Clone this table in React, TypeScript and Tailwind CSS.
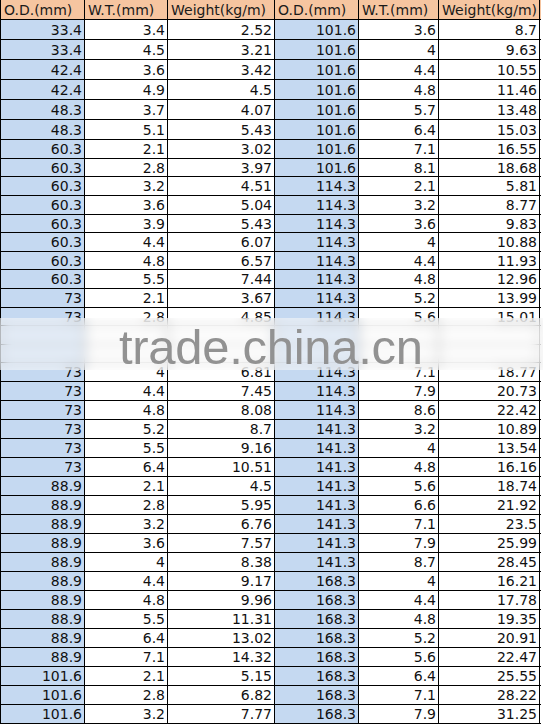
import React from "react";

const left: [string, string, string][] = [
  ["33.4", "3.4", "2.52"],
  ["33.4", "4.5", "3.21"],
  ["42.4", "3.6", "3.42"],
  ["42.4", "4.9", "4.5"],
  ["48.3", "3.7", "4.07"],
  ["48.3", "5.1", "5.43"],
  ["60.3", "2.1", "3.02"],
  ["60.3", "2.8", "3.97"],
  ["60.3", "3.2", "4.51"],
  ["60.3", "3.6", "5.04"],
  ["60.3", "3.9", "5.43"],
  ["60.3", "4.4", "6.07"],
  ["60.3", "4.8", "6.57"],
  ["60.3", "5.5", "7.44"],
  ["73", "2.1", "3.67"],
  ["73", "2.8", "4.85"],
  ["73", "3.2", "5.51"],
  ["73", "3.6", "6.16"],
  ["73", "4", "6.81"],
  ["73", "4.4", "7.45"],
  ["73", "4.8", "8.08"],
  ["73", "5.2", "8.7"],
  ["73", "5.5", "9.16"],
  ["73", "6.4", "10.51"],
  ["88.9", "2.1", "4.5"],
  ["88.9", "2.8", "5.95"],
  ["88.9", "3.2", "6.76"],
  ["88.9", "3.6", "7.57"],
  ["88.9", "4", "8.38"],
  ["88.9", "4.4", "9.17"],
  ["88.9", "4.8", "9.96"],
  ["88.9", "5.5", "11.31"],
  ["88.9", "6.4", "13.02"],
  ["88.9", "7.1", "14.32"],
  ["101.6", "2.1", "5.15"],
  ["101.6", "2.8", "6.82"],
  ["101.6", "3.2", "7.77"],
];

const right: [string, string, string][] = [
  ["101.6", "3.6", "8.7"],
  ["101.6", "4", "9.63"],
  ["101.6", "4.4", "10.55"],
  ["101.6", "4.8", "11.46"],
  ["101.6", "5.7", "13.48"],
  ["101.6", "6.4", "15.03"],
  ["101.6", "7.1", "16.55"],
  ["101.6", "8.1", "18.68"],
  ["114.3", "2.1", "5.81"],
  ["114.3", "3.2", "8.77"],
  ["114.3", "3.6", "9.83"],
  ["114.3", "4", "10.88"],
  ["114.3", "4.4", "11.93"],
  ["114.3", "4.8", "12.96"],
  ["114.3", "5.2", "13.99"],
  ["114.3", "5.6", "15.01"],
  ["114.3", "6", "16.02"],
  ["114.3", "6.3", "16.78"],
  ["114.3", "7.1", "18.77"],
  ["114.3", "7.9", "20.73"],
  ["114.3", "8.6", "22.42"],
  ["141.3", "3.2", "10.89"],
  ["141.3", "4", "13.54"],
  ["141.3", "4.8", "16.16"],
  ["141.3", "5.6", "18.74"],
  ["141.3", "6.6", "21.92"],
  ["141.3", "7.1", "23.5"],
  ["141.3", "7.9", "25.99"],
  ["141.3", "8.7", "28.45"],
  ["168.3", "4", "16.21"],
  ["168.3", "4.4", "17.78"],
  ["168.3", "4.8", "19.35"],
  ["168.3", "5.2", "20.91"],
  ["168.3", "5.6", "22.47"],
  ["168.3", "6.4", "25.55"],
  ["168.3", "7.1", "28.22"],
  ["168.3", "7.9", "31.25"],
];

const rowH = (i: number) => {
  if (i < 6) return "h-[20px]";
  if (i < 19) {
    const p = ["h-[19px]", "h-[18px]", "h-[19px]", "h-[19px]", "h-[18px]", "h-[19px]", "h-[18px]", "h-[19px]", "h-[19px]", "h-[18px]", "h-[19px]", "h-[18px]", "h-[19px]"];
    return p[i - 6];
  }
  return "h-[19px]";
};

const num = "flex items-center justify-end pr-[2px] pt-[1px] border-r border-black";
const head = "flex items-center pl-[3px] pt-[1px] border-r border-black whitespace-nowrap";

export default function App() {
  return (
    <div
      className="relative w-[543px] h-[727px] bg-white overflow-hidden text-[14px] text-[#111]"
      style={{ fontFamily: '"DejaVu Sans", Verdana, sans-serif' }}
    >
      <div className="w-[541px] border-l border-black">
        <div className="flex h-[20px] border-b border-black bg-[#f6c5a0] text-[#1a1a1a]">
          <div className={`${head} w-[84px]`}>O.D.(mm)</div>
          <div className={`${head} w-[83px]`}>W.T.(mm)</div>
          <div className={`${head} w-[107px]`}>Weight(kg/m)</div>
          <div className={`${head} w-[84px]`}>O.D.(mm)</div>
          <div className={`${head} w-[80px]`}>W.T.(mm)</div>
          <div className={`${head} w-[101px]`}>Weight(kg/m)</div>
        </div>
        {left.map((l, i) => {
          const r = right[i];
          const hidden = i === 16 || i === 17;
          return (
            <div key={i} className={`flex border-b border-black ${rowH(i)} ${hidden ? "text-transparent" : ""}`}>
              <div className={`${num} w-[84px] bg-[#c5d9f1]`}>{l[0]}</div>
              <div className={`${num} w-[83px]`}>{l[1]}</div>
              <div className={`${num} w-[107px]`}>{l[2]}</div>
              <div className={`${num} w-[84px] bg-[#c5d9f1]`}>{r[0]}</div>
              <div className={`${num} w-[80px]`}>{r[1]}</div>
              <div className={`${num} w-[101px]`}>{r[2]}</div>
            </div>
          );
        })}
      </div>
      <div className="absolute left-0 top-[318px] w-[543px] h-[52px] bg-white/55 backdrop-blur-[6px]" />
      <div
        className="absolute left-[119px] top-[323px] text-[49px] leading-none text-[#929292] tracking-[-0.3px]"
        style={{ fontFamily: '"Liberation Sans", Arial, sans-serif' }}
      >
        trade.china.cn
      </div>
    </div>
  );
}
